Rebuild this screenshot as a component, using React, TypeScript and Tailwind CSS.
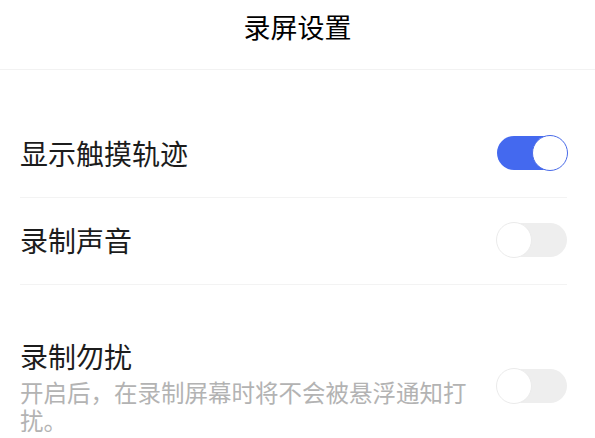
import { useState } from "react";

type Setting = {
  id: string;
  label: string;
  description?: string;
  on: boolean;
};

const initialSettings: Setting[] = [
  { id: "touch", label: "显示触摸轨迹", on: true },
  { id: "sound", label: "录制声音", on: false },
  {
    id: "dnd",
    label: "录制勿扰",
    description: "开启后，在录制屏幕时将不会被悬浮通知打扰。",
    on: false,
  },
];

function Toggle({ on, onClick }: { on: boolean; onClick: () => void }) {
  return (
    <button
      onClick={onClick}
      className={`relative shrink-0 w-[70px] h-[34px] rounded-full ${on ? "bg-[#4469ef]" : "bg-[#eeeeee]"}`}
    >
      <span
        className={`absolute top-[-1px] w-[36px] h-[36px] rounded-full bg-white border-[1.5px] ${
          on ? "right-[-1px] border-[#4a6be8]" : "left-[-1px] border-[#ebebeb]"
        }`}
      />
    </button>
  );
}

export default function App() {
  const [settings, setSettings] = useState(initialSettings);

  const flip = (id: string) =>
    setSettings((s) => s.map((x) => (x.id === id ? { ...x, on: !x.on } : x)));

  return (
    <div className="min-h-screen bg-white font-['Noto_Sans_CJK_SC',sans-serif] overflow-hidden">
      {/* Header */}
      <div className="h-[70px] pt-[9px] border-b border-[#f2f2f2] text-center">
        <h1 className="text-[27px] leading-[36px] font-normal text-black">录屏设置</h1>
      </div>

      <div className="pt-[40px] pl-[20px] pr-[28px]">
        {settings.map((item, i) => (
          <div
            key={item.id}
            className={`flex items-center gap-[26px] ${
              i === 0 ? "pt-[25px] pb-[26px]" : i === 1 ? "pt-[24px] pb-[26px]" : "pt-[53px] pb-[10px]"
            } ${i < settings.length - 1 ? "border-b border-[#f3f3f3]" : ""}`}
          >
            <div className="flex-1 min-w-0">
              <div className="text-[28px] leading-[36px] text-[#1c1c1c]">{item.label}</div>
              {item.description && (
                <p className="text-[23.5px] leading-[28px] text-[#b3b3b3] mt-[4px]">{item.description}</p>
              )}
            </div>
            <Toggle on={item.on} onClick={() => flip(item.id)} />
          </div>
        ))}
      </div>
    </div>
  );
}
